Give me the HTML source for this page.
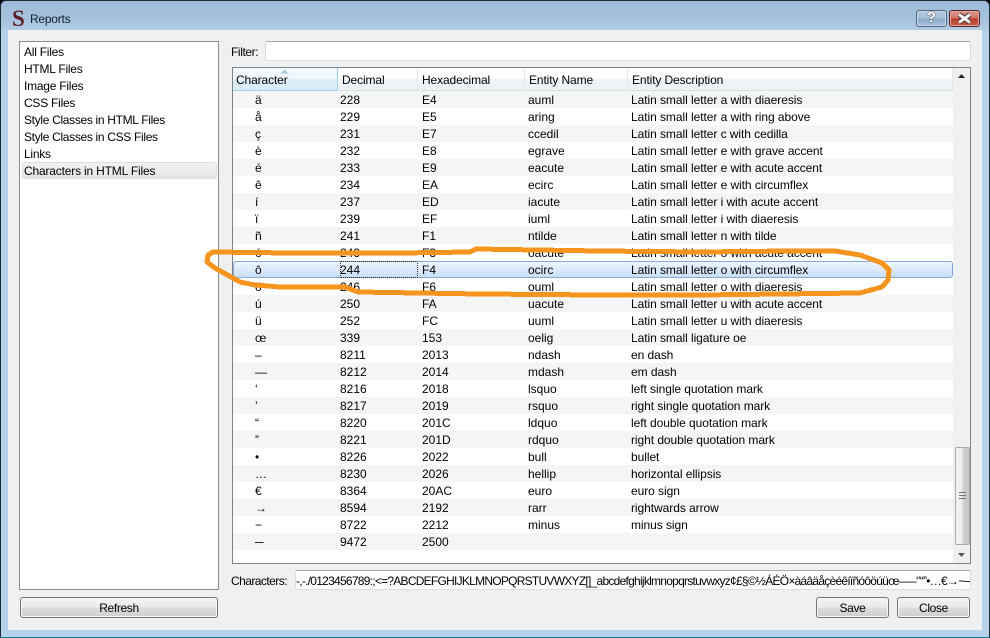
<!DOCTYPE html>
<html><head><meta charset="utf-8"><title>Reports</title>
<style>
html,body{margin:0;padding:0;background:#000}
body{width:990px;height:638px;overflow:hidden;position:relative;font:12px/17px "Liberation Sans",sans-serif;color:#000}
div,span{position:absolute;box-sizing:border-box;white-space:nowrap}
#win{left:0;top:0;width:990px;height:638px;border:1px solid #1c2a33;border-bottom:2px solid #0e7f93;border-radius:6px 6px 0 0;background:linear-gradient(90deg,#a9c5df 0,#b7d3ec 8px,#94b4d3 300px,#a4c1dc 700px,#bcd8ee 100%)}
#tbar{left:0;top:0;width:988px;height:30px;border-radius:5px 5px 0 0;background:linear-gradient(180deg,#9dbbd8 0,#a5c2dd 60%,#b3cde4 100%)}
#bot{left:0;top:600px;width:988px;height:36px;background:#b7d3ec}
#lefts{left:0;top:30px;width:7px;height:600px;background:#b7d3ec}
#rights{left:981px;top:30px;width:7px;height:600px;background:#b7d3ec}
#cl{left:7px;top:29px;width:974px;height:600px;background:#eff1f0}
.t{line-height:17px}
.l{letter-spacing:-.24px}
.list{left:19px;top:41px;width:200px;height:549px;background:#fff;border:1px solid #8a8c8e}
.sel{left:22px;top:162px;width:195px;height:17px;border:1px solid #dcdedc;border-radius:3px;background:linear-gradient(180deg,#f3f3f2,#e4e5e4)}
.inp{background:#fff;border:1px solid #d8dee6;border-top-color:#a8abad;border-radius:2px}
.grid{left:232px;top:67px;width:739px;height:497px;background:#fff;border:1px solid #7f8285;overflow:hidden}
.hd{left:0;top:0;height:23px;background:linear-gradient(180deg,#fff 0,#fff 48%,#f0f4f7 50%,#eef2f5 100%);border-bottom:1px solid #d8e0e6;border-right:1px solid #e3e6e8;padding-left:4px;line-height:25px;letter-spacing:-.12px}
.r{left:0;width:720px;height:17px}
.g{background:#f4f6f5}
.r span{top:1px}
.a{left:22px}.b{left:107px}.c{left:189px}.d{left:295px}.e{left:398px;letter-spacing:-.06px}
.btn{background:linear-gradient(180deg,#f3f3f3 0,#ebebeb 48%,#dcdcdc 52%,#cfcfcf 100%);border:1px solid #70757a;border-radius:3px;text-align:center;line-height:20px;box-shadow:inset 0 0 0 1px #f8f8f8;letter-spacing:-.35px}
</style></head><body>
<div id="win">
<div id="tbar"></div><div id="bot"></div><div id="lefts"></div><div id="rights"></div>
<div id="cl"></div>
</div>

<span style="left:12px;top:7px;font:bold 23px/23px 'Liberation Serif',serif;color:#5e1f28">S</span>
<span class="t l" style="left:30px;top:11px;color:#10202c">Reports</span>

<div style="left:916px;top:10px;width:31px;height:17px;border:1px solid #51677f;border-radius:3px;background:linear-gradient(180deg,#b4c9de 0,#a9c0d8 48%,#8aa7c6 52%,#a6c2de 100%);box-shadow:inset 0 0 0 1px #c9d8e6"></div>
<span style="left:925px;top:9px;width:13px;text-align:center;font:bold 15px/18px 'Liberation Sans',sans-serif;color:#fff;text-shadow:0 0 1px #333,0 0 1px #333">?</span>
<div style="left:949px;top:10px;width:31px;height:17px;border:1px solid #5a2028;border-radius:3px;background:linear-gradient(180deg,#d99a8e 0,#d07a6c 45%,#b93e2e 52%,#c95c48 100%);box-shadow:inset 0 0 0 1px #dfa89e"></div>
<svg style="position:absolute;left:949px;top:10px" width="31" height="17"><path d="M10 4.500L21 12.500M21 4.500L10 12.500" stroke="#4a2a2a" stroke-width="5"/><path d="M10 4.500L21 12.500M21 4.500L10 12.500" stroke="#f2f2f2" stroke-width="3"/></svg>

<div class="list"></div>
<div class="sel"></div>
<span class="t l" style="left:24px;top:44px">All Files</span>
<span class="t l" style="left:24px;top:61px">HTML Files</span>
<span class="t l" style="left:24px;top:78px">Image Files</span>
<span class="t l" style="left:24px;top:95px">CSS Files</span>
<span class="t l" style="left:24px;top:112px;letter-spacing:-.32px">Style Classes in HTML Files</span>
<span class="t l" style="left:24px;top:129px;letter-spacing:-.32px">Style Classes in CSS Files</span>
<span class="t l" style="left:24px;top:146px">Links</span>
<span class="t l" style="left:24px;top:163px;letter-spacing:-.18px">Characters in HTML Files</span>

<span class="t" style="left:231px;top:44px;letter-spacing:-.4px">Filter:</span>
<div class="inp" style="left:265px;top:41px;width:706px;height:20px"></div>

<div class="grid">
<div class="hd" style="left:0;width:105px;padding-left:3px;background:linear-gradient(180deg,#f2f9fd 0,#f0f8fd 48%,#def0fa 50%,#d8ecf8 100%);border-right:1px solid #a9d0ea;border-bottom:1px solid #a9d0ea">Character</div>
<svg style="position:absolute;left:47px;top:1px" width="9" height="5"><path d="M0.500 4.500L4.500 0.500L8.500 4.500Z" fill="#a8c4d8"/></svg>
<div class="hd" style="left:105px;width:80px;padding-left:4px">Decimal</div>
<div class="hd" style="left:185px;width:107px">Hexadecimal</div>
<div class="hd" style="left:292px;width:103px">Entity Name</div>
<div class="hd" style="left:395px;width:325px">Entity Description</div>

<div class="r g" style="top:23px"><span class="a">ä</span><span class="b">228</span><span class="c">E4</span><span class="d">auml</span><span class="e">Latin small letter a with diaeresis</span></div>
<div class="r" style="top:40px"><span class="a">å</span><span class="b">229</span><span class="c">E5</span><span class="d">aring</span><span class="e">Latin small letter a with ring above</span></div>
<div class="r g" style="top:57px"><span class="a">ç</span><span class="b">231</span><span class="c">E7</span><span class="d">ccedil</span><span class="e">Latin small letter c with cedilla</span></div>
<div class="r" style="top:74px"><span class="a">è</span><span class="b">232</span><span class="c">E8</span><span class="d">egrave</span><span class="e">Latin small letter e with grave accent</span></div>
<div class="r g" style="top:91px"><span class="a">é</span><span class="b">233</span><span class="c">E9</span><span class="d">eacute</span><span class="e">Latin small letter e with acute accent</span></div>
<div class="r" style="top:108px"><span class="a">ê</span><span class="b">234</span><span class="c">EA</span><span class="d">ecirc</span><span class="e">Latin small letter e with circumflex</span></div>
<div class="r g" style="top:125px"><span class="a">í</span><span class="b">237</span><span class="c">ED</span><span class="d">iacute</span><span class="e">Latin small letter i with acute accent</span></div>
<div class="r" style="top:142px"><span class="a">ï</span><span class="b">239</span><span class="c">EF</span><span class="d">iuml</span><span class="e">Latin small letter i with diaeresis</span></div>
<div class="r g" style="top:159px"><span class="a">ñ</span><span class="b">241</span><span class="c">F1</span><span class="d">ntilde</span><span class="e">Latin small letter n with tilde</span></div>
<div class="r" style="top:176px"><span class="a">ó</span><span class="b">243</span><span class="c">F3</span><span class="d">oacute</span><span class="e">Latin small letter o with acute accent</span></div>
<div class="r" style="top:193px;background:linear-gradient(180deg,#eef5fd,#c9dff8);border:1px solid #85abd8;border-radius:3px"></div>
<div style="left:107px;top:193px;width:78px;height:17px;border:1px dotted #333"></div>
<div class="r" style="top:193px"><span class="a">ô</span><span class="b">244</span><span class="c">F4</span><span class="d">ocirc</span><span class="e">Latin small letter o with circumflex</span></div>
<div class="r" style="top:210px"><span class="a">ö</span><span class="b">246</span><span class="c">F6</span><span class="d">ouml</span><span class="e">Latin small letter o with diaeresis</span></div>
<div class="r g" style="top:227px"><span class="a">ú</span><span class="b">250</span><span class="c">FA</span><span class="d">uacute</span><span class="e">Latin small letter u with acute accent</span></div>
<div class="r" style="top:244px"><span class="a">ü</span><span class="b">252</span><span class="c">FC</span><span class="d">uuml</span><span class="e">Latin small letter u with diaeresis</span></div>
<div class="r g" style="top:261px"><span class="a">œ</span><span class="b">339</span><span class="c">153</span><span class="d">oelig</span><span class="e">Latin small ligature oe</span></div>
<div class="r" style="top:278px"><span class="a">–</span><span class="b">8211</span><span class="c">2013</span><span class="d">ndash</span><span class="e">en dash</span></div>
<div class="r g" style="top:295px"><span class="a">—</span><span class="b">8212</span><span class="c">2014</span><span class="d">mdash</span><span class="e">em dash</span></div>
<div class="r" style="top:312px"><span class="a">‘</span><span class="b">8216</span><span class="c">2018</span><span class="d">lsquo</span><span class="e">left single quotation mark</span></div>
<div class="r g" style="top:329px"><span class="a">’</span><span class="b">8217</span><span class="c">2019</span><span class="d">rsquo</span><span class="e">right single quotation mark</span></div>
<div class="r" style="top:346px"><span class="a">“</span><span class="b">8220</span><span class="c">201C</span><span class="d">ldquo</span><span class="e">left double quotation mark</span></div>
<div class="r g" style="top:363px"><span class="a">”</span><span class="b">8221</span><span class="c">201D</span><span class="d">rdquo</span><span class="e">right double quotation mark</span></div>
<div class="r" style="top:380px"><span class="a">•</span><span class="b">8226</span><span class="c">2022</span><span class="d">bull</span><span class="e">bullet</span></div>
<div class="r g" style="top:397px"><span class="a">…</span><span class="b">8230</span><span class="c">2026</span><span class="d">hellip</span><span class="e">horizontal ellipsis</span></div>
<div class="r" style="top:414px"><span class="a">€</span><span class="b">8364</span><span class="c">20AC</span><span class="d">euro</span><span class="e">euro sign</span></div>
<div class="r g" style="top:431px"><span class="a">→</span><span class="b">8594</span><span class="c">2192</span><span class="d">rarr</span><span class="e">rightwards arrow</span></div>
<div class="r" style="top:448px"><span class="a">−</span><span class="b">8722</span><span class="c">2212</span><span class="d">minus</span><span class="e">minus sign</span></div>
<div class="r g" style="top:465px"><span class="a">─</span><span class="b">9472</span><span class="c">2500</span><span class="d"></span><span class="e"></span></div>

<div style="left:720px;top:0;width:17px;height:495px;background:#eff1f0"></div>
<svg style="position:absolute;left:724px;top:5px" width="9" height="6"><path d="M1 5L4.500 1L8 5Z" fill="#222"/></svg>
<svg style="position:absolute;left:724px;top:484px" width="9" height="6"><path d="M1 1L4.500 5L8 1Z" fill="#555"/></svg>
<div style="left:722px;top:379px;width:15px;height:98px;border:1px solid #a9abad;border-radius:2px;background:linear-gradient(90deg,#f4f4f4 0,#ebebeb 45%,#d2d2d2 55%,#c4c4c4 100%)"></div>
<div style="left:726px;top:424px;width:7px;height:7px;border-top:1px solid #777;border-bottom:1px solid #777"></div>
<div style="left:726px;top:427px;width:7px;height:1px;background:#777"></div>
</div>

<span class="t" style="left:231px;top:573px;letter-spacing:-.55px">Characters:</span>
<div class="inp" style="left:295px;top:570px;width:676px;height:20px;overflow:hidden"><span class="t" style="left:0;top:2px;font-size:12px;letter-spacing:-.74px">-,-./0123456789:;&lt;=?ABCDEFGHIJKLMNOPQRSTUVWXYZ[]_abcdefghijklmnopqrstuvwxyz¢£§©½ÁÉÖ×àáâäåçèéêíïñóôöúüœ–—‘’“”•…€→−─</span></div>

<div class="btn" style="left:20px;top:597px;width:198px;height:21px">Refresh</div>
<div class="btn" style="left:816px;top:597px;width:73px;height:21px">Save</div>
<div class="btn" style="left:897px;top:597px;width:73px;height:21px">Close</div>

<svg style="position:absolute;left:0;top:0" width="990" height="638"><path d="M240 282L215 268L207 262L208 255L213 252L290 253L400 253L470 252L476 249L600 251L700 252L790 251L835 251L860 255L882 263L889 270L888 280L882 287L860 293L700 295L600 295L480 294L358 292L345 287L280 287L255 285L240 282" fill="none" stroke="#f7941d" stroke-width="5" stroke-linejoin="round" shape-rendering="crispEdges"/></svg>
</body></html>
